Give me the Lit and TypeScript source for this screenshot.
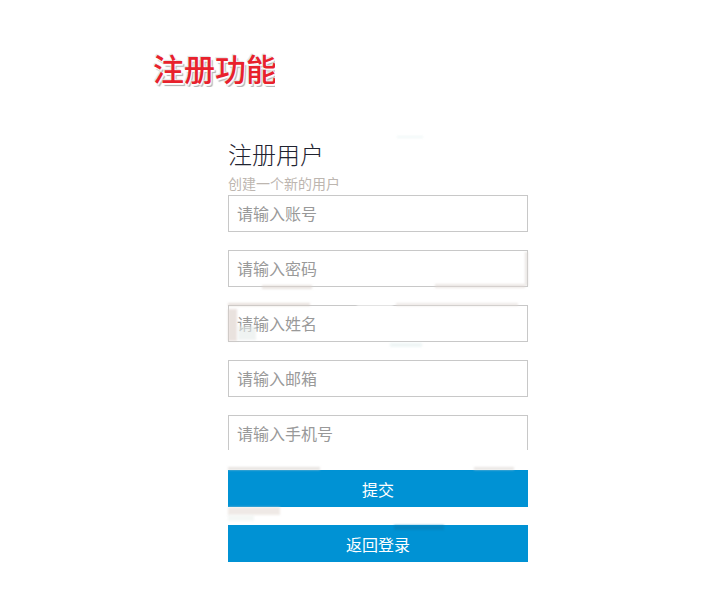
import { LitElement, html, css } from "lit";
import { customElement } from "lit/decorators.js";

// Faint compression-style smudges that lie over the form: x, y, width, height, colour.
const SMUDGES: [number, number, number, number, string][] = [
  [397, 136, 26, 2, "#e6f3f3"],
  [525, 252, 3, 34, "#dcd6d2"],
  [262, 285, 50, 4, "#dcd4ce"],
  [435, 284, 90, 4, "#e0d8d4"],
  [228, 303, 82, 3, "#d8ccc6"],
  [396, 303, 122, 3, "#e4dcd8"],
  [357, 304, 36, 3, "#ffffff"],
  [228, 309, 9, 32, "#dccfc9"],
  [238, 326, 18, 14, "#e6ecea"],
  [390, 343, 32, 4, "#e4f0f0"],
  [228, 467, 92, 3, "#d8d2cc"],
  [474, 467, 40, 3, "#dcd6d2"],
  [228, 507, 52, 8, "#e6dcd6"],
  [228, 515, 26, 6, "#eef2f0"],
  [394, 525, 50, 5, "#0a7fb6"],
];

@customElement("app-root")
export class AppRoot extends LitElement {
  static styles = css`
    :host {
      display: block;
      position: relative;
      width: 721px;
      height: 608px;
      overflow: hidden;
      background: #fff;
      font-family: "Microsoft YaHei", "Noto Sans CJK SC", sans-serif;
    }
    .logo {
      margin: 0 0 0 153px;
      padding-top: 49px;
      width: 122px;
      height: 38px;
      overflow: hidden;
      font-size: 31px;
      line-height: 37px;
      font-weight: 500;
      white-space: nowrap;
      color: #e8212c;
      text-shadow: 0 0 2px #fff, 1px 2px 1px #fff, -1px -1px 1px #d8d8d8,
        2px 3px 1px #a8a8a8;
    }
    .form {
      margin: 50px 0 0 228px;
      width: 300px;
    }
    h2 {
      margin: 0 0 2px;
      font-size: 24px;
      line-height: 34px;
      font-weight: 300;
      color: #1f2330;
    }
    .sub {
      margin: 0;
      font-size: 14px;
      line-height: 20px;
      height: 20px;
      color: #bdb6b0;
    }
    .fields {
      display: flex;
      flex-direction: column;
      gap: 18px;
      margin-top: 2px;
    }
    .field {
      display: block;
      box-sizing: border-box;
      width: 300px;
      height: 37px;
      padding: 0 8px 2px;
      border: 1px solid #c8c8c8;
      border-radius: 0;
      outline: none;
      background: transparent;
      font: inherit;
      font-size: 16px;
      color: #333;
    }
    .field::placeholder {
      color: #999;
      opacity: 1;
    }
    .clip {
      height: 35px;
      overflow: hidden;
    }
    .buttons {
      display: flex;
      flex-direction: column;
      gap: 18px;
      margin-top: 20px;
    }
    button {
      display: block;
      width: 300px;
      height: 37px;
      border: 0;
      padding: 0;
      background: #0092d4;
      color: #fff;
      font: inherit;
      font-size: 16px;
    }
    .smudge {
      position: absolute;
      filter: blur(1.2px);
      opacity: 0.6;
      pointer-events: none;
    }
  `;

  render() {
    return html`
      <div class="logo">注册功能</div>
      <div class="form">
        <h2>注册用户</h2>
        <p class="sub">创建一个新的用户</p>
        <div class="fields">
          <input class="field" placeholder="请输入账号" />
          <input class="field" placeholder="请输入密码" />
          <input class="field" placeholder="请输入姓名" />
          <input class="field" placeholder="请输入邮箱" />
          <div class="clip"><input class="field" placeholder="请输入手机号" /></div>
        </div>
        <div class="buttons">
          <button>提交</button>
          <button>返回登录</button>
        </div>
      </div>
      ${SMUDGES.map(
        ([x, y, w, h, c]) =>
          html`<div
            class="smudge"
            style="left:${x}px;top:${y}px;width:${w}px;height:${h}px;background:${c}"
          ></div>`
      )}
    `;
  }
}
